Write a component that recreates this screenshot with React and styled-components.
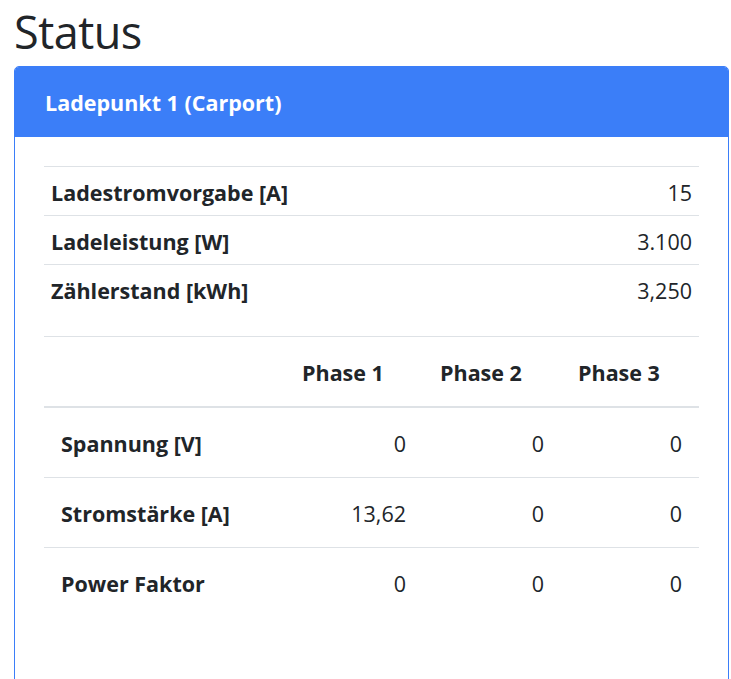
import React from 'react';
import styled, { createGlobalStyle } from 'styled-components';

const GlobalStyle = createGlobalStyle`
    body {
        margin: 0;
        font-family: "Open Sans", "Noto Sans", sans-serif;
        color: #212529;
        background: #fff;
    }
`;

const summary = [
    { title: 'Ladestromvorgabe [A]', value: '15' },
    { title: 'Ladeleistung [W]', value: '3.100' },
    { title: 'Zählerstand [kWh]', value: '3,250' },
];

const phases = [
    { title: 'Spannung [V]', values: ['0', '0', '0'] },
    { title: 'Stromstärke [A]', values: ['13,62', '0', '0'] },
    { title: 'Power Faktor', values: ['0', '0', '0'] },
];

const App = () => {
    return (
        <Page>
            <GlobalStyle />
            <Title>Status</Title>
            <Card>
                <CardHeader>Ladepunkt 1 (Carport)</CardHeader>
                <CardBody>
                    <SummaryTable>
                        <tbody>
                            {summary.map(item => (
                                <tr key={item.title}>
                                    <SummaryLabel>{item.title}</SummaryLabel>
                                    <SummaryValue>{item.value}</SummaryValue>
                                </tr>
                            ))}
                        </tbody>
                    </SummaryTable>
                    <PhaseTable>
                        <thead>
                            <tr>
                                <PhaseHead></PhaseHead>
                                <PhaseHead>Phase 1</PhaseHead>
                                <PhaseHead>Phase 2</PhaseHead>
                                <PhaseHead>Phase 3</PhaseHead>
                            </tr>
                        </thead>
                        <tbody>
                            {phases.map(row => (
                                <PhaseRow key={row.title}>
                                    <PhaseLabel>{row.title}</PhaseLabel>
                                    {row.values.map((v, i) => (
                                        <PhaseValue key={i}>{v}</PhaseValue>
                                    ))}
                                </PhaseRow>
                            ))}
                        </tbody>
                    </PhaseTable>
                </CardBody>
            </Card>
        </Page>
    );
};

const Page = styled.div`
    padding: 0 2px 0 14px;
`;

const Title = styled.h1`
    margin: 0;
    padding-top: 4px;
    height: 62px;
    font-size: 45px;
    font-weight: 500;
    line-height: 56px;
    letter-spacing: -0.5px;
`;

const Card = styled.div`
    border: 1px solid #3b7ef8;
    border-radius: 5px;
    overflow: hidden;
    min-height: 700px;
`;

const CardHeader = styled.div`
    height: 70px;
    padding: 0 30px;
    display: flex;
    align-items: center;
    background: #3b7ef8;
    color: #fff;
    font-size: 21.5px;
    font-weight: 700;
`;

const CardBody = styled.div`
    padding: 29px 29px;
`;

const SummaryTable = styled.table`
    width: 100%;
    border-collapse: collapse;
    margin-bottom: 23px;
    font-size: 21.5px;
    line-height: 28px;
    td {
        border-top: 1px solid #dee2e6;
    }
`;

const SummaryLabel = styled.td`
    height: 45px;
    padding: 3px 7px 0;
    font-weight: 700;
`;

const SummaryValue = styled.td`
    padding: 3px 7px 0;
    text-align: right;
`;

const PhaseTable = styled.table`
    width: 100%;
    border-collapse: collapse;
    table-layout: fixed;
    font-size: 21.5px;
    line-height: 28px;
    th:first-child, td:first-child {
        width: 207px;
    }
`;

const PhaseHead = styled.th`
    height: 67px;
    padding: 2px 17px 0;
    text-align: left;
    font-weight: 700;
    border-top: 1px solid #dee2e6;
    border-bottom: 2px solid #dee2e6;
`;

const PhaseRow = styled.tr`
    & + & td {
        border-top: 1px solid #dee2e6;
    }
`;

const PhaseLabel = styled.td`
    height: 66px;
    padding: 3px 17px 0;
    font-weight: 700;
`;

const PhaseValue = styled.td`
    padding: 3px 17px 0;
    text-align: right;
`;

export default App;
